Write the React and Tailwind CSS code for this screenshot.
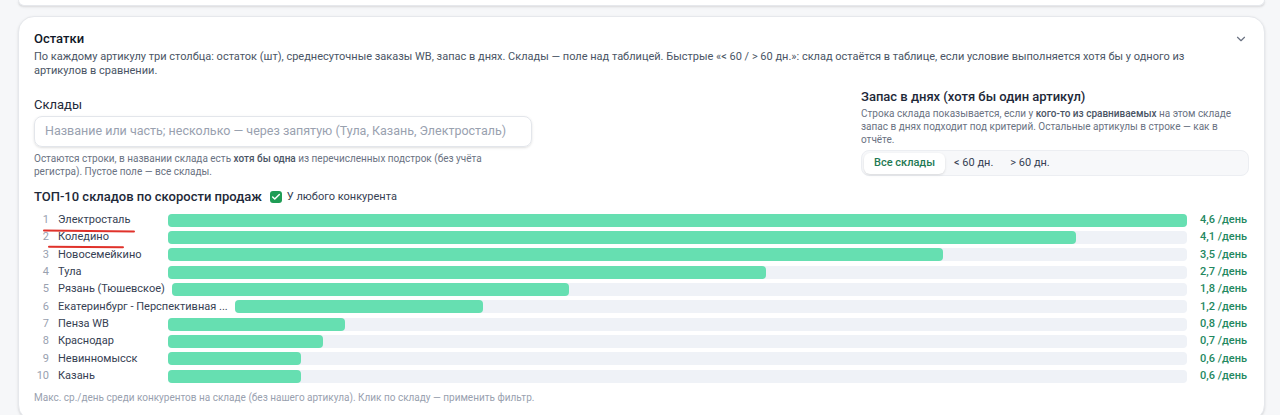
import React from 'react';
import { ChevronDown, Check } from 'lucide-react';

const rows = [
  { name: 'Электросталь', v: 4.6, mark: 'w-[92px] left-[9px] top-[18px] rotate-[0.6deg]' },
  { name: 'Коледино', v: 4.1, mark: 'w-[76px] left-[14px] top-[17px] rotate-[0.4deg]' },
  { name: 'Новосемейкино', v: 3.5 },
  { name: 'Тула', v: 2.7 },
  { name: 'Рязань (Тюшевское)', v: 1.8 },
  { name: 'Екатеринбург - Перспективная ...', v: 1.2 },
  { name: 'Пенза WB', v: 0.8 },
  { name: 'Краснодар', v: 0.7 },
  { name: 'Невинномысск', v: 0.6 },
  { name: 'Казань', v: 0.6 },
];

const max = 4.6;

function Row({ i, row }) {
  return (
    <div className="relative flex h-[17.33px] items-center">
      <div className="flex min-w-[127px] items-center gap-[9px] text-[11px] leading-[14px]">
        <span className="w-[15px] text-right text-gray-400">{i + 1}</span>
        <span className="whitespace-nowrap text-gray-700">{row.name}</span>
      </div>
      <div className="ml-[7px] h-[13px] flex-1 rounded bg-[#eff2f7]">
        <div className="h-full rounded bg-[#66dfb1]" style={{ width: `${(row.v / max) * 100}%` }} />
      </div>
      <div className="ml-[13px] w-[49px] whitespace-nowrap text-[11px] font-medium leading-[14px] text-[#23885f]">
        {row.v.toFixed(1).replace('.', ',')} /день
      </div>
      {row.mark && (
        <span className={`pointer-events-none absolute h-[1.5px] rounded bg-[#e0322b] ${row.mark}`} />
      )}
    </div>
  );
}

export default function App() {
  return (
    <div className="min-h-screen bg-[#f6f7f9] font-['Roboto','Noto_Sans',sans-serif] text-gray-900">
      <div className="ml-[18px] mr-[15px] h-[6px] rounded-b-2xl border border-t-0 border-[#e6e8ec] bg-white shadow-sm" />

      <section className="ml-[18px] mr-[15px] mt-[10px] rounded-2xl border border-[#e6e8ec] bg-white pl-[15px] pr-[15px] pt-[13px] pb-4 shadow-sm">
        <div className="flex items-start justify-between">
          <h2 className="text-[13px] font-medium leading-[17px] text-gray-900">Остатки</h2>
          <ChevronDown className="mr-[1px] mt-[2px] h-[14px] w-[14px] text-gray-500" strokeWidth={2} />
        </div>
        <p className="mt-[3px] max-w-[1180px] text-[11px] leading-[14px] text-gray-600">
          По каждому артикулу три столбца: остаток (шт), среднесуточные заказы WB, запас в днях. Склады — поле над таблицей. Быстрые «&lt; 60 / &gt; 60 дн.»: склад остаётся в таблице, если условие выполняется хотя бы у одного из артикулов в сравнении.
        </p>

        <div className="mt-[11px] flex justify-between">
          <div className="w-[498px] pt-[8px]">
            <div className="text-[13px] leading-[16px] text-gray-800">Склады</div>
            <div className="mt-[3px] flex h-[31px] items-center whitespace-nowrap rounded-lg border border-[#e3e6eb] px-[10px] text-[12.5px] text-gray-400 shadow-sm">
              Название или часть; несколько — через запятую (Тула, Казань, Электросталь)
            </div>
            <p className="mt-[5px] pr-[24px] text-[10px] leading-[13px] text-gray-500">
              Остаются строки, в названии склада есть <span className="font-medium text-gray-600">хотя бы одна</span> из перечисленных подстрок (без учёта регистра). Пустое поле — все склады.
            </p>
          </div>

          <div className="w-[388px]">
            <div className="text-[13px] font-medium leading-[16px] text-gray-800">Запас в днях (хотя бы один артикул)</div>
            <p className="mt-[2px] text-[10px] leading-[13px] text-gray-500">
              Строка склада показывается, если у <span className="font-medium text-gray-600">кого-то из сравниваемых</span> на этом складе запас в днях подходит под критерий. Остальные артикулы в строке — как в отчёте.
            </p>
            <div className="mt-[4px] flex h-[26px] items-center gap-[2px] rounded-lg border border-[#eceef2] bg-[#f7f8fa] px-[2px] text-[11px]">
              <span className="flex h-[21px] items-center rounded-md bg-white px-[10px] font-medium text-[#1f7a54] shadow-sm">Все склады</span>
              <span className="px-[7px] text-gray-700">&lt; 60 дн.</span>
              <span className="px-[8px] text-gray-700">&gt; 60 дн.</span>
            </div>
          </div>
        </div>

        <div className="mt-[11px] flex items-center gap-[8px]">
          <span className="text-[13px] font-medium leading-[16px] text-gray-800">ТОП-10 складов по скорости продаж</span>
          <label className="flex items-center gap-[5px] text-[11px] text-gray-700">
            <span className="flex h-[12px] w-[12px] items-center justify-center rounded-[3px] bg-[#1f9d55]">
              <Check className="h-[10px] w-[10px] text-white" strokeWidth={3.5} />
            </span>
            У любого конкурента
          </label>
        </div>

        <div className="mt-[6px] flex flex-col">
          {rows.map((row, i) => (
            <Row key={row.name} i={i} row={row} />
          ))}
        </div>

        <p className="mt-[6px] text-[10px] leading-[13px] text-gray-400">
          Макс. ср./день среди конкурентов на складе (без нашего артикула). Клик по складу — применить фильтр.
        </p>
      </section>
    </div>
  );
}
